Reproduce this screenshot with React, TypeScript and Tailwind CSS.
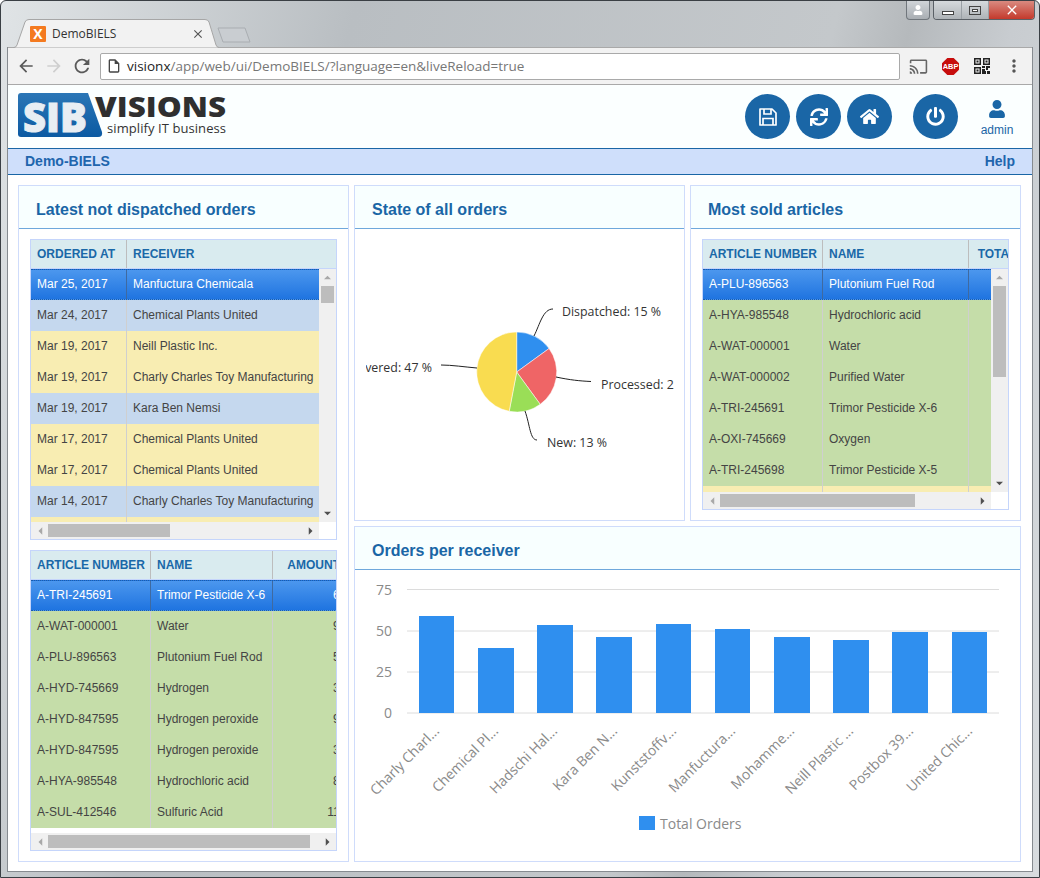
import { FaHome, FaPowerOff, FaSync, FaUser } from 'react-icons/fa';
import { MdArrowBack, MdArrowForward, MdCast, MdClose, MdMoreVert, MdOutlineInsertDriveFile, MdRefresh } from 'react-icons/md';

type Col = { w: number; title: string; right?: boolean; pad?: number };
type Row = { cells: string[]; tone: 'sel' | 'blue' | 'yellow' | 'green' };

const toneClass = {
  sel: 'bg-[linear-gradient(#4c97ee,#1f74e0)] text-white border-y border-dotted border-[#1b5cab]',
  blue: 'bg-[#c5d8ee] text-[#444]',
  yellow: 'bg-[#f8edb2] text-[#444]',
  green: 'bg-[#c5dda9] text-[#444]',
};

const Tri = ({ dir, dark }: { dir: 'up' | 'down' | 'left' | 'right'; dark?: boolean }) => {
  const points = { up: '0,6 10,6 5,1', down: '0,1 10,1 5,6', left: '7,0 7,10 2,5', right: '1,0 1,10 6,5' }[dir];
  const size = dir === 'up' || dir === 'down' ? 'w-[7px] h-[5px]' : 'w-[6px] h-[8px]';
  return (
    <svg viewBox={dir === 'up' || dir === 'down' ? '0 0 10 7' : '0 0 8 10'} className={size}>
      <polygon points={points} className={dark ? 'fill-[#505050]' : 'fill-[#a8a8a8]'} />
    </svg>
  );
};

const DataGrid = ({
  cols,
  rows,
  height,
  vThumb,
  hThumb,
}: {
  cols: Col[];
  rows: Row[];
  height: string;
  vThumb?: string;
  hThumb: string;
}) => (
  <div className={`flex w-[307px] flex-col border border-[#c5d5fb] bg-white ${height}`}>
    <div className="flex h-[29px] shrink-0 overflow-hidden border-b border-[#c5d5fb] bg-[#d9ebef]">
      {cols.map((c, i) => (
        <div
          key={c.title}
          style={{ width: c.w, paddingRight: c.pad }}
          className={`flex shrink-0 items-center border-r border-[#bdbdbd] pl-[6px] text-[12px] font-bold whitespace-nowrap text-[#1a68a8] ${c.right ? 'justify-end' : ''} ${i === cols.length - 1 ? 'border-r-0' : ''}`}
        >
          {c.title}
        </div>
      ))}
    </div>
    <div className="flex min-h-0 flex-1">
      <div className="min-w-0 flex-1 overflow-hidden">
        {rows.map((r, n) => (
          <div key={n} className={`flex h-[31px] w-max min-w-full ${toneClass[r.tone]}`}>
            {r.cells.map((text, i) => (
              <div
                key={i}
                style={{ width: cols[i].w, paddingRight: cols[i].right ? 6 : 0 }}
                className={`flex shrink-0 items-center border-r pb-[2px] pl-[6px] text-[12px] whitespace-nowrap ${cols[i].right ? 'justify-end' : ''} ${r.tone === 'sel' ? 'border-[#3f6aa0]' : 'border-[#cfcfcf]'} ${i === cols.length - 1 ? 'border-r-0' : ''}`}
              >
                {text}
              </div>
            ))}
          </div>
        ))}
      </div>
      {vThumb && (
        <div className="flex w-[17px] shrink-0 flex-col items-center bg-[#f0f0f0]">
          <div className="flex h-[17px] items-center justify-center">
            <Tri dir="up" />
          </div>
          <div className={`w-[13px] bg-[#bdbdbd] ${vThumb}`} />
          <div className="mt-auto flex h-[17px] items-center justify-center">
            <Tri dir="down" dark />
          </div>
        </div>
      )}
    </div>
    <div className="flex h-[17px] shrink-0">
      <div className="flex flex-1 items-center bg-[#f0f0f0]">
        <div className="flex w-[17px] justify-center">
          <Tri dir="left" />
        </div>
        <div className={`h-[13px] bg-[#bdbdbd] ${hThumb}`} />
        <div className="ml-auto flex w-[17px] justify-center">
          <Tri dir="right" dark />
        </div>
      </div>
      {vThumb && <div className="w-[17px] bg-white" />}
    </div>
  </div>
);

const Card = ({ title, className, children }: { title: string; className?: string; children: React.ReactNode }) => (
  <section className={`flex flex-col border border-[#cfdcfb] bg-white ${className ?? ''}`}>
    <h2 className="flex h-[43px] shrink-0 items-center border-b border-[#6fa8dc] bg-[#f8ffff] pt-[6px] pl-[17px] text-[16px] font-bold text-[#1a66a6]">
      {title}
    </h2>
    {children}
  </section>
);

const pie = [
  { pct: 15, fill: 'fill-[#2f8fef]' },
  { pct: 25, fill: 'fill-[#ef6566]' },
  { pct: 13, fill: 'fill-[#9ade57]' },
  { pct: 47, fill: 'fill-[#f9dc50]' },
];

const PieChart = () => {
  const cx = 516.7;
  const cy = 372;
  const r = 40;
  let acc = 0;
  return (
    <svg viewBox="366 229 308 291" className="h-[291px] w-[308px] [font-family:'Open_Sans',sans-serif]">
      {pie.map((s) => {
        const a0 = (acc / 100) * Math.PI * 2;
        acc += s.pct;
        const a1 = (acc / 100) * Math.PI * 2;
        const d = `M${cx} ${cy}L${cx + r * Math.sin(a0)} ${cy - r * Math.cos(a0)}A${r} ${r} 0 0 1 ${cx + r * Math.sin(a1)} ${cy - r * Math.cos(a1)}Z`;
        return <path key={s.pct} d={d} className={`${s.fill} stroke-[#fff] stroke-[0.5px]`} />;
      })}
      <g className="fill-none stroke-[#222] stroke-[1px]">
        <path d="M534 336C540 324 543 309 553 309" />
        <path d="M556 377C570 380 580 381 591 381.5" />
        <path d="M525 411C530 425 530 440 537 440" />
        <path d="M477 368C465 367 452 365 441 365" />
      </g>
      <g className="fill-[#333] text-[12.4px]">
        <text x="562" y="316">Dispatched: 15 %</text>
        <text x="601" y="389">Processed: 25 %</text>
        <text x="547" y="447">New: 13 %</text>
        <text x="432" y="372" textAnchor="end">Delivered: 47 %</text>
      </g>
    </svg>
  );
};

const bars = [
  { x: 419, w: 35, top: 616, label: 'Charly Charl...', end: 440 },
  { x: 478, w: 36, top: 648, label: 'Chemical Pl...', end: 499 },
  { x: 537, w: 36, top: 625, label: 'Hadschi Hal...', end: 558 },
  { x: 596, w: 36, top: 637, label: 'Kara Ben N...', end: 618 },
  { x: 656, w: 35, top: 624, label: 'Kunststoffv...', end: 677 },
  { x: 715, w: 35, top: 629, label: 'Manfuctura...', end: 736 },
  { x: 774, w: 36, top: 637, label: 'Mohamme...', end: 795 },
  { x: 833, w: 36, top: 640, label: 'Neill Plastic ...', end: 854 },
  { x: 892, w: 36, top: 632, label: 'Postbox 39...', end: 914 },
  { x: 952, w: 35, top: 632, label: 'United Chic...', end: 973 },
];

const BarChart = () => (
  <svg viewBox="355 570 665 291" className="h-[291px] w-[665px] [font-family:'Open_Sans',sans-serif]">
    {[
      [589.5, '75'],
      [631, '50'],
      [672, '25'],
      [713, '0'],
    ].map(([y, t]) => (
      <g key={t}>
        <line x1="407" x2="999" y1={y} y2={y} className="stroke-[#dcdcdc] stroke-[1px]" />
        <text x="392" y={Number(y) + 5} textAnchor="end" className="fill-[#8a8a8a] text-[14px]">
          {t}
        </text>
      </g>
    ))}
    {bars.map((b) => (
      <g key={b.label}>
        <rect x={b.x} y={b.top} width={b.w} height={713 - b.top} className="fill-[#2f8fef]" />
        <text
          x={b.end}
          y={732}
          textAnchor="end"
          transform={`rotate(-45 ${b.end} 732)`}
          className="fill-[#8a8a8a] text-[14px]"
        >
          {b.label}
        </text>
      </g>
    ))}
    <rect x="639" y="816" width="16" height="14" className="fill-[#2f8fef]" />
    <text x="660" y="829" className="fill-[#8a8a8a] text-[14px]">
      Total Orders
    </text>
  </svg>
);

const Logo = () => (
  <svg viewBox="18 92 208 47" className="h-[47px] w-[208px]">
    <defs>
      <linearGradient id="logoBlue" x1="0" y1="0" x2="0" y2="1">
        <stop offset="0" stopColor="#2a76b6" />
        <stop offset="1" stopColor="#0b5aa2" />
      </linearGradient>
    </defs>
    <path d="M21 93H88L102 132Q103 137 98 137H21Q18 137 18 134V96Q18 93 21 93Z" fill="url(#logoBlue)" />
    <text x="23" y="132" textLength="64" lengthAdjust="spacingAndGlyphs" className="fill-[#e8eef3] stroke-[#e8eef3] stroke-[1px] text-[41px] font-extrabold [font-family:'Open_Sans',sans-serif]">
      SIB
    </text>
    <text x="95" y="117" textLength="131" lengthAdjust="spacingAndGlyphs" className="fill-[#2f2f2f] text-[28px] font-extrabold [font-family:'Open_Sans',sans-serif]">
      VISIONS
    </text>
    <text x="107" y="133" textLength="119" lengthAdjust="spacing" className="fill-[#333] text-[13px] [font-family:'Open_Sans',sans-serif]">
      simplify IT business
    </text>
  </svg>
);

const SaveIcon = () => (
  <svg viewBox="0 0 18 18" className="h-[18px] w-[18px] fill-none stroke-white stroke-[1.7px]">
    <path d="M1 1H13L17 5V17H1Z" strokeLinejoin="round" />
    <path d="M5 1V6H12V1" />
    <path d="M4 17V10.5H14V17" />
  </svg>
);

const QrIcon = () => (
  <svg viewBox="0 0 16 16" className="h-[16px] w-[16px] fill-[#222]">
    <path fillRule="evenodd" d="M0 0h7v7H0zM1.5 1.5v4h4v-4zM9 0h7v7H9zM10.5 1.5v4h4v-4zM0 9h7v7H0zM1.5 10.5v4h4v-4z" />
    <rect x="2.5" y="2.5" width="2" height="2" />
    <rect x="11.5" y="2.5" width="2" height="2" />
    <rect x="2.5" y="11.5" width="2" height="2" />
    <path d="M8 8h3v2H8zM12 8h4v2h-2v2h-2zM8 11h3v2h1v3H8zM13 13h3v3h-3z" />
  </svg>
);

const AbpIcon = () => (
  <svg viewBox="0 0 16 16" className="h-[17px] w-[17px]">
    <polygon points="5,0 11,0 16,5 16,11 11,16 5,16 0,11 0,5" className="fill-[#c70d0d]" />
    <text x="8" y="10.5" textAnchor="middle" className="fill-white text-[7px] font-bold [font-family:'Liberation_Sans',sans-serif]">
      ABP
    </text>
  </svg>
);

const RoundBtn = ({ children, className }: { children: React.ReactNode; className?: string }) => (
  <button className={`flex h-[45px] w-[45px] items-center justify-center rounded-full bg-[#1a66a6] text-white ${className ?? ''}`}>
    {children}
  </button>
);

const row = (tone: Row['tone'], ...cells: string[]): Row => ({ tone, cells });

const orders: Row[] = [
  row('sel', 'Mar 25, 2017', 'Manfuctura Chemicala'),
  row('blue', 'Mar 24, 2017', 'Chemical Plants United'),
  row('yellow', 'Mar 19, 2017', 'Neill Plastic Inc.'),
  row('yellow', 'Mar 19, 2017', 'Charly Charles Toy Manufacturing'),
  row('blue', 'Mar 19, 2017', 'Kara Ben Nemsi'),
  row('yellow', 'Mar 17, 2017', 'Chemical Plants United'),
  row('yellow', 'Mar 17, 2017', 'Chemical Plants United'),
  row('blue', 'Mar 14, 2017', 'Charly Charles Toy Manufacturing'),
  row('yellow', '', ''),
];

const orderItems: Row[] = [
  row('sel', 'A-TRI-245691', 'Trimor Pesticide X-6', '645'),
  row('green', 'A-WAT-000001', 'Water', '912'),
  row('green', 'A-PLU-896563', 'Plutonium Fuel Rod', '538'),
  row('green', 'A-HYD-745669', 'Hydrogen', '376'),
  row('green', 'A-HYD-847595', 'Hydrogen peroxide', '921'),
  row('green', 'A-HYD-847595', 'Hydrogen peroxide', '347'),
  row('green', 'A-HYA-985548', 'Hydrochloric acid', '846'),
  row('green', 'A-SUL-412546', 'Sulfuric Acid', '1120'),
];

const sold: Row[] = [
  row('sel', 'A-PLU-896563', 'Plutonium Fuel Rod', ''),
  row('green', 'A-HYA-985548', 'Hydrochloric acid', ''),
  row('green', 'A-WAT-000001', 'Water', ''),
  row('green', 'A-WAT-000002', 'Purified Water', ''),
  row('green', 'A-TRI-245691', 'Trimor Pesticide X-6', ''),
  row('green', 'A-OXI-745669', 'Oxygen', ''),
  row('green', 'A-TRI-245698', 'Trimor Pesticide X-5', ''),
  row('yellow', '', '', ''),
];

export default function App() {
  return (
    <div className="relative flex h-[878px] w-[1040px] flex-col overflow-hidden rounded-t-[6px] border border-[#3a3f44] bg-[linear-gradient(105deg,#e0e4e6_0%,#b9bec2_28%,#c4c8cb_66%,#b5b9bc_72%,#c8ccd0_80%,#d8dcdf_100%)] pr-[6px] pb-[5px] pl-[6px] [font-family:'Liberation_Sans',sans-serif]">
      {/* window buttons */}
      <div className="absolute top-0 right-[4px] flex items-start gap-[3px]">
        <div className="flex h-[19px] w-[24px] items-center justify-center rounded-b-[4px] border border-t-0 border-[#70767c] bg-[linear-gradient(#d0d4d8,#a9aeb3)]">
          <FaUser className="h-[10px] w-[10px] text-white" />
        </div>
        <div className="flex h-[19px] overflow-hidden rounded-b-[4px] border border-t-0 border-[#5a6066]">
          <div className="flex w-[27px] items-end justify-center bg-[linear-gradient(#d6dadd,#aeb3b7)] pb-[4px]">
            <div className="h-[4px] w-[12px] border border-[#444] bg-white" />
          </div>
          <div className="flex w-[28px] items-center justify-center border-x border-[#9aa0a5] bg-[linear-gradient(#d6dadd,#aeb3b7)]">
            <div className="flex h-[9px] w-[12px] items-center justify-center border border-[#444]">
              <div className="h-[3px] w-[6px] border border-[#444] bg-white" />
            </div>
          </div>
          <div className="flex w-[45px] items-center justify-center bg-[linear-gradient(#d98a80,#c4392c)]">
            <MdClose className="h-[16px] w-[16px] text-white" />
          </div>
        </div>
      </div>

      {/* tab strip */}
      <div className="flex h-[46px] shrink-0 items-end pl-[6px]">
        <div className="relative z-10 -mb-px flex h-[29px] w-[206px] items-center pr-[14px] pl-[17px] text-[12px] text-[#333] [font-family:'Open_Sans',sans-serif]">
          <svg viewBox="0 0 206 29" className="absolute inset-0 h-[29px] w-[206px]">
            <path d="M0 28.5H1Q3 28.5 4 26L12 3Q13 0.5 16 0.5H192Q195 0.5 196 3L203 26Q204 28.5 206 28.5" className="fill-[#f2f2f2] stroke-[#a6a6a6] stroke-[1px]" />
          </svg>
          <div className="relative flex h-[16px] w-[16px] items-center justify-center rounded-[1px] bg-[#f47a20] text-[14px] leading-none font-bold text-white">
            X
          </div>
          <span className="relative ml-[6px] flex-1">DemoBIELS</span>
          <MdClose className="relative h-[14px] w-[14px] text-[#555]" />
        </div>
        <svg viewBox="0 0 34 16" className="mb-[4px] -ml-[2px] h-[16px] w-[34px]">
          <path d="M1 1H28L33 15H6Z" className="fill-[#c9cdd1] stroke-[#a9adb1] stroke-[1px]" />
        </svg>
      </div>

      {/* everything under the tab strip */}
      <div className="flex min-h-0 flex-1 flex-col border-x border-b border-[#868b90]">
        <div className="flex h-[38px] shrink-0 items-center border-y border-[#a9a9a9] bg-[#f2f2f2] pl-[4px]">
          <div className="flex w-[28px] justify-center">
            <MdArrowBack className="h-[20px] w-[20px] text-[#5a5a5a]" />
          </div>
          <div className="flex w-[28px] justify-center">
            <MdArrowForward className="h-[20px] w-[20px] text-[#cfcfcf]" />
          </div>
          <div className="flex w-[28px] justify-center">
            <MdRefresh className="h-[22px] w-[22px] text-[#5a5a5a]" />
          </div>
          <div className="ml-[4px] flex h-[27px] w-[800px] items-center gap-[5px] rounded-[2px] border border-[#a9a9a9] bg-white pl-[5px] text-[13.5px] [font-family:'Open_Sans',sans-serif]">
            <MdOutlineInsertDriveFile className="h-[16px] w-[16px] text-[#444]" />
            <span className="text-[#222]">
              visionx<span className="text-[#777]">/app/web/ui/DemoBIELS/?language=en&amp;liveReload=true</span>
            </span>
          </div>
          <div className="ml-[2px] flex w-[32px] justify-center">
            <MdCast className="h-[19px] w-[19px] text-[#666]" />
          </div>
          <div className="flex w-[32px] justify-center">
            <AbpIcon />
          </div>
          <div className="flex w-[32px] justify-center">
            <QrIcon />
          </div>
          <div className="flex w-[32px] justify-center">
            <MdMoreVert className="h-[20px] w-[20px] text-[#555]" />
          </div>
        </div>

        {/* app header */}
        <header className="flex h-[63px] shrink-0 items-start bg-[#fbffff] pt-[7px] pr-[15px] pl-[10px]">
          <Logo />
          <div className="mt-[2px] ml-auto flex gap-[6px]">
            <RoundBtn>
              <SaveIcon />
            </RoundBtn>
            <RoundBtn>
              <FaSync className="h-[18px] w-[18px]" />
            </RoundBtn>
            <RoundBtn>
              <FaHome className="h-[19px] w-[19px]" />
            </RoundBtn>
            <RoundBtn className="ml-[15px]">
              <FaPowerOff className="h-[19px] w-[19px]" />
            </RoundBtn>
          </div>
          <div className="mt-[8px] ml-[19px] flex w-[40px] flex-col items-center text-[#1a66a6]">
            <FaUser className="h-[18px] w-[18px]" />
            <span className="mt-[5px] text-[12px] leading-[14px]">admin</span>
          </div>
        </header>

        <nav className="flex h-[27px] shrink-0 items-center justify-between border-y border-[#1a66a6] bg-[#cfdffb] pr-[17px] pl-[17px] text-[14px] font-bold text-[#2065ad]">
          <span>Demo-BIELS</span>
          <span>Help</span>
        </nav>

        <main className="grid flex-1 grid-cols-[331px_331px_331px] grid-rows-[336px_336px] gap-[5px] bg-white pt-[10px] pl-[10px]">
          <Card title="Latest not dispatched orders" className="row-span-2">
            <div className="flex flex-col gap-[10px] px-[11px] pt-[10px]">
              <DataGrid
                height="h-[301px]"
                cols={[
                  { w: 96, title: 'ORDERED AT' },
                  { w: 400, title: 'RECEIVER' },
                ]}
                rows={orders}
                vThumb="h-[17px]"
                hThumb="w-[122px]"
              />
              <DataGrid
                height="h-[301px]"
                cols={[
                  { w: 120, title: 'ARTICLE NUMBER' },
                  { w: 122, title: 'NAME' },
                  { w: 86, title: 'AMOUNT', right: true, pad: 19 },
                ]}
                rows={orderItems}
                hThumb="w-[262px]"
              />
            </div>
          </Card>
          <Card title="State of all orders">
            <div className="px-[11px]">
              <PieChart />
            </div>
          </Card>
          <Card title="Most sold articles">
            <div className="px-[11px] pt-[10px]">
              <DataGrid
                height="h-[271px]"
                cols={[
                  { w: 120, title: 'ARTICLE NUMBER' },
                  { w: 146, title: 'NAME' },
                  { w: 120, title: 'TOTAL ORDERS', right: true, pad: 18 },
                ]}
                rows={sold}
                vThumb="h-[91px]"
                hThumb="w-[195px]"
              />
            </div>
          </Card>
          <Card title="Orders per receiver" className="col-span-2">
            <BarChart />
          </Card>
        </main>
      </div>
    </div>
  );
}
